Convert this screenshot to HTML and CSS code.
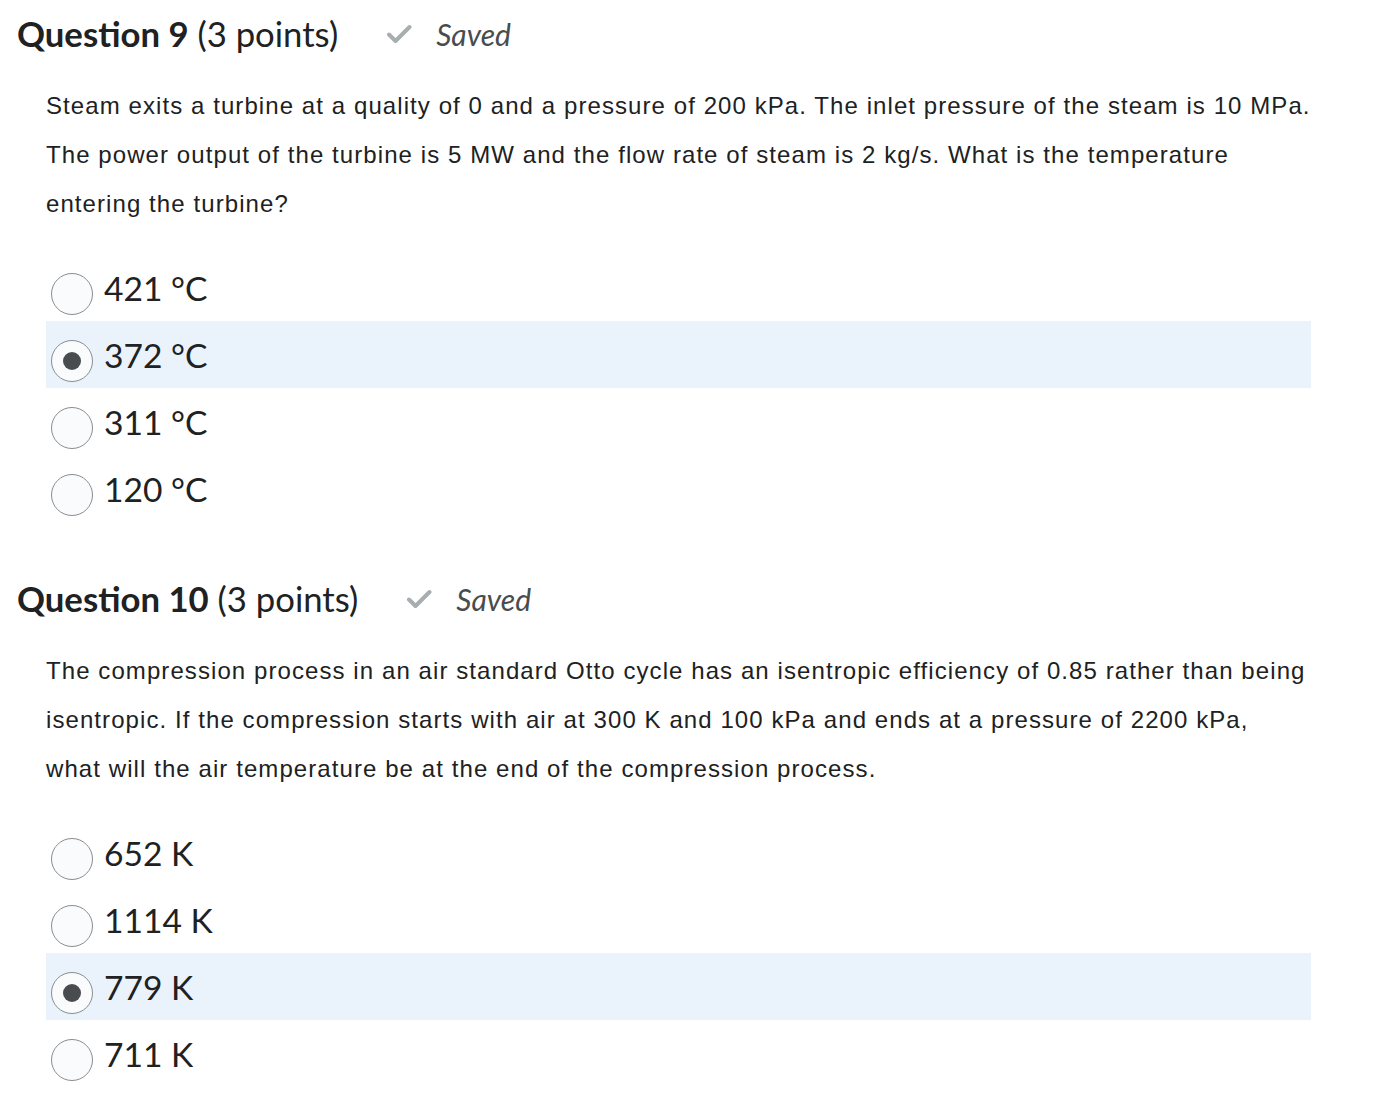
FILE: index.html
```html
<!DOCTYPE html>
<html>
<head>
<meta charset="utf-8">
<link rel="stylesheet" href="styles.css">
</head>
<body>
<section class="question">
  <div class="q-head">
    <h2 class="q-title"><strong>Question 9</strong> (3 points)</h2>
    <span class="saved">
      <svg class="check" width="26" height="22" viewBox="0 0 26 22"><path d="M3 11.5 L9.5 18 L23.5 4" fill="none" stroke="#a8adb0" stroke-width="4" stroke-linecap="round" stroke-linejoin="round"/></svg>
      <span class="saved-text">Saved</span>
    </span>
  </div>
  <p class="q-body">Steam exits a turbine at a quality of 0 and a pressure of 200 kPa. The inlet pressure of the steam is 10 MPa.<br>The power output of the turbine is 5 MW and the flow rate of steam is 2 kg/s. What is the temperature<br>entering the turbine?</p>
  <ul class="options">
    <li class="option"><span class="radio"></span><span class="label">421 °C</span></li>
    <li class="option selected"><span class="radio"></span><span class="label">372 °C</span></li>
    <li class="option"><span class="radio"></span><span class="label">311 °C</span></li>
    <li class="option"><span class="radio"></span><span class="label">120 °C</span></li>
  </ul>
</section>
<section class="question">
  <div class="q-head">
    <h2 class="q-title"><strong>Question 10</strong> (3 points)</h2>
    <span class="saved">
      <svg class="check" width="26" height="22" viewBox="0 0 26 22"><path d="M3 11.5 L9.5 18 L23.5 4" fill="none" stroke="#a8adb0" stroke-width="4" stroke-linecap="round" stroke-linejoin="round"/></svg>
      <span class="saved-text">Saved</span>
    </span>
  </div>
  <p class="q-body">The compression process in an air standard Otto cycle has an isentropic efficiency of 0.85 rather than being<br>isentropic. If the compression starts with air at 300 K and 100 kPa and ends at a pressure of 2200 kPa,<br>what will the air temperature be at the end of the compression process.</p>
  <ul class="options">
    <li class="option"><span class="radio"></span><span class="label">652 K</span></li>
    <li class="option"><span class="radio"></span><span class="label">1114 K</span></li>
    <li class="option selected"><span class="radio"></span><span class="label">779 K</span></li>
    <li class="option"><span class="radio"></span><span class="label">711 K</span></li>
  </ul>
</section>
</body>
</html>
```
FILE: styles.css
```css
html, body {
  margin: 0;
  padding: 0;
  background: #ffffff;
}
body {
  padding: 14px 0 0 0;
  color: #202122;
}
.question {
  margin-bottom: 57px;
}
.q-head {
  display: flex;
  align-items: center;
  height: 40px;
  padding-left: 17px;
}
.q-title {
  margin: 0;
  font-family: Lato, "Noto Sans", sans-serif;
  font-size: 34.7px;
  font-weight: 400;
  line-height: 40px;
  color: #202122;
}
.q-title strong {
  font-weight: 700;
}
.saved {
  display: flex;
  align-items: center;
  margin-left: 48px;
}
.check {
  display: block;
  margin-top: 0;
}
.saved-text {
  margin-left: 24px;
  font-family: Lato, "Noto Sans", sans-serif;
  font-style: italic;
  font-size: 30px;
  color: #494c4e;
}
.q-body {
  margin: 27px 0 26px 46px;
  width: 1300px;
  font-family: "Liberation Sans", Arial, sans-serif;
  font-size: 24px;
  letter-spacing: 1.08px;
  line-height: 49px;
  color: #202122;
}
.options {
  list-style: none;
  margin: 0 0 0 46px;
  padding: 0;
  width: 1265px;
}
.option {
  display: flex;
  align-items: center;
  height: 67px;
}
.option.selected {
  background: #eaf2fb;
}
.radio {
  box-sizing: border-box;
  width: 42px;
  height: 42px;
  margin-left: 5px;
  margin-top: 13px;
  border: 1px solid #8a8d90;
  border-radius: 50%;
  background: #fafbfd;
  display: flex;
  align-items: center;
  justify-content: center;
  flex: none;
}
.option.selected .radio::after {
  content: "";
  width: 18px;
  height: 18px;
  border-radius: 50%;
  background: #494c4e;
}
.label {
  margin-left: 11px;
  font-family: Lato, "Noto Sans", sans-serif;
  font-size: 33.6px;
  color: #202122;
}
```
